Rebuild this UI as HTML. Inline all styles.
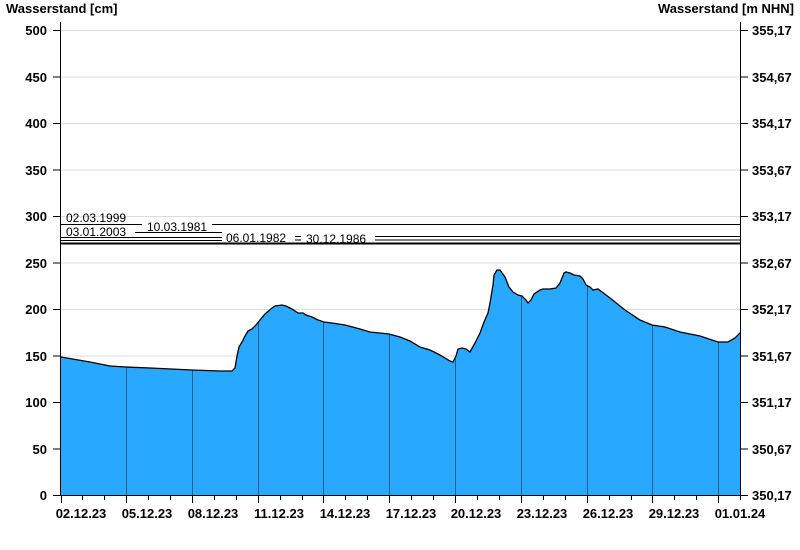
<!DOCTYPE html>
<html><head><meta charset="utf-8"><style>
html,body{margin:0;padding:0;background:#fff;}
svg{display:block;font-family:"Liberation Sans",Arial,sans-serif;}
</style></head><body>
<svg width="800" height="550" viewBox="0 0 800 550" xmlns="http://www.w3.org/2000/svg">
<rect width="800" height="550" fill="#fff"/>
<text x="6" y="13" font-size="13" font-weight="bold" fill="#000">Wasserstand [cm]</text>
<text x="794" y="13" font-size="13" font-weight="bold" fill="#000" text-anchor="end">Wasserstand [m NHN]</text>
<g stroke="#dcdcdc" stroke-width="1">
<line x1="61" y1="30.5" x2="740" y2="30.5"/><line x1="61" y1="77" x2="740" y2="77"/>
<line x1="61" y1="123.5" x2="740" y2="123.5"/><line x1="61" y1="170" x2="740" y2="170"/>
<line x1="61" y1="216.5" x2="740" y2="216.5"/><line x1="61" y1="263" x2="740" y2="263"/>
<line x1="61" y1="309.5" x2="740" y2="309.5"/><line x1="61" y1="356" x2="740" y2="356"/>
<line x1="61" y1="402.5" x2="740" y2="402.5"/><line x1="61" y1="449" x2="740" y2="449"/>
</g>
<path d="M61,357 L90,362 L110,366 L126,367 L150,368 L192,370 L220,371 L232,371 L235,368 L237,356 L239,347 L242,342 L245,336 L248,331 L252,329 L256,325 L260,320 L265,314 L272,308 L275,306 L282,305 L286,306 L292,309 L298,313 L303,313 L306,315 L312,317 L318,320 L324,322 L332,323 L345,325 L360,329 L370,332 L389,334 L400,337 L410,341 L420,347 L430,350 L440,355 L450,361 L453,362 L456,356 L458,349 L462,348 L466,349 L470,352 L475,343 L480,333 L484,322 L488,313 L490,303 L493,285 L494,275 L497,270 L500,270 L505,277 L509,287 L513,292 L518,295 L522,296 L526,300 L528,303 L531,300 L534,294 L540,290 L543,289 L550,289 L556,288 L560,283 L564,273 L566,272 L570,273 L574,275 L580,276 L583,279 L586,285 L590,287 L593,290 L598,289 L610,298 L625,310 L640,320 L652,325 L665,327 L680,332 L700,336 L712,340 L718,342 L728,342 L735,338 L740,333 L740,495 L61,495 Z" fill="#29a8ff"/>
<g stroke="#1e5f8c" stroke-width="1">
<line x1="126.5" y1="367" x2="126.5" y2="495"/><line x1="192.5" y1="370" x2="192.5" y2="495"/>
<line x1="258.5" y1="323" x2="258.5" y2="495"/><line x1="323.5" y1="322" x2="323.5" y2="495"/>
<line x1="389.5" y1="334" x2="389.5" y2="495"/><line x1="455.5" y1="359" x2="455.5" y2="495"/>
<line x1="521.5" y1="296" x2="521.5" y2="495"/><line x1="587.5" y1="286" x2="587.5" y2="495"/>
<line x1="652.5" y1="325" x2="652.5" y2="495"/><line x1="718.5" y1="342" x2="718.5" y2="495"/>
</g>
<path d="M61,357 L90,362 L110,366 L126,367 L150,368 L192,370 L220,371 L232,371 L235,368 L237,356 L239,347 L242,342 L245,336 L248,331 L252,329 L256,325 L260,320 L265,314 L272,308 L275,306 L282,305 L286,306 L292,309 L298,313 L303,313 L306,315 L312,317 L318,320 L324,322 L332,323 L345,325 L360,329 L370,332 L389,334 L400,337 L410,341 L420,347 L430,350 L440,355 L450,361 L453,362 L456,356 L458,349 L462,348 L466,349 L470,352 L475,343 L480,333 L484,322 L488,313 L490,303 L493,285 L494,275 L497,270 L500,270 L505,277 L509,287 L513,292 L518,295 L522,296 L526,300 L528,303 L531,300 L534,294 L540,290 L543,289 L550,289 L556,288 L560,283 L564,273 L566,272 L570,273 L574,275 L580,276 L583,279 L586,285 L590,287 L593,290 L598,289 L610,298 L625,310 L640,320 L652,325 L665,327 L680,332 L700,336 L712,340 L718,342 L728,342 L735,338 L740,333" fill="none" stroke="#000" stroke-width="1.3"/>
<g stroke="#000" stroke-width="1">
<line x1="61" y1="224.5" x2="142" y2="224.5"/><line x1="212" y1="224.5" x2="740" y2="224.5"/>
<line x1="135" y1="232.5" x2="222" y2="232.5"/>
<line x1="61" y1="237.5" x2="222" y2="237.5"/>
<line x1="295" y1="236.5" x2="301" y2="236.5"/><line x1="375" y1="236.5" x2="740" y2="236.5"/>
<line x1="61" y1="240.5" x2="222" y2="240.5"/><line x1="295" y1="240" x2="301" y2="240"/><line x1="375" y1="240" x2="740" y2="240"/>
</g>
<line x1="61" y1="243.5" x2="740" y2="243.5" stroke="#000" stroke-width="2"/>
<g font-size="12" fill="#000">
<text x="66" y="222">02.03.1999</text>
<text x="66" y="236">03.01.2003</text>
<text x="147" y="231">10.03.1981</text>
<text x="226" y="242">06.01.1982</text>
<text x="306" y="243">30.12.1986</text>
</g>
<g stroke="#000" stroke-width="1">
<line x1="60.5" y1="22" x2="60.5" y2="495"/>
<line x1="740.5" y1="22" x2="740.5" y2="495"/>
<line x1="60" y1="495.5" x2="741" y2="495.5"/>
</g>
<g stroke="#000" stroke-width="1">
<line x1="53" y1="30.5" x2="60" y2="30.5"/><line x1="53" y1="77" x2="60" y2="77"/><line x1="53" y1="123.5" x2="60" y2="123.5"/>
<line x1="53" y1="170" x2="60" y2="170"/><line x1="53" y1="216.5" x2="60" y2="216.5"/><line x1="53" y1="263" x2="60" y2="263"/>
<line x1="53" y1="309.5" x2="60" y2="309.5"/><line x1="53" y1="356" x2="60" y2="356"/><line x1="53" y1="402.5" x2="60" y2="402.5"/>
<line x1="53" y1="449" x2="60" y2="449"/><line x1="53" y1="495.5" x2="60" y2="495.5"/>
<line x1="741" y1="30.5" x2="748" y2="30.5"/><line x1="741" y1="77" x2="748" y2="77"/><line x1="741" y1="123.5" x2="748" y2="123.5"/>
<line x1="741" y1="170" x2="748" y2="170"/><line x1="741" y1="216.5" x2="748" y2="216.5"/><line x1="741" y1="263" x2="748" y2="263"/>
<line x1="741" y1="309.5" x2="748" y2="309.5"/><line x1="741" y1="356" x2="748" y2="356"/><line x1="741" y1="402.5" x2="748" y2="402.5"/>
<line x1="741" y1="449" x2="748" y2="449"/><line x1="741" y1="495.5" x2="748" y2="495.5"/>
</g>
<g font-size="13" font-weight="bold" fill="#000" text-anchor="end">
<text x="47" y="35">500</text><text x="47" y="82">450</text><text x="47" y="128">400</text>
<text x="47" y="175">350</text><text x="47" y="221">300</text><text x="47" y="268">250</text>
<text x="47" y="314">200</text><text x="47" y="361">150</text><text x="47" y="407">100</text>
<text x="47" y="454">50</text><text x="47" y="500">0</text>
</g>
<g font-size="13" font-weight="bold" fill="#000">
<text x="752" y="35">355,17</text><text x="752" y="82">354,67</text><text x="752" y="128">354,17</text>
<text x="752" y="175">353,67</text><text x="752" y="221">353,17</text><text x="752" y="268">352,67</text>
<text x="752" y="314">352,17</text><text x="752" y="361">351,67</text><text x="752" y="407">351,17</text>
<text x="752" y="454">350,67</text><text x="752" y="500">350,17</text>
</g>
<g stroke="#000" stroke-width="1">
<path d="M82.5,496v4M104.5,496v4M148.5,496v4M170.5,496v4M214.5,496v4M236.5,496v4M280.5,496v4M302.5,496v4M345.5,496v4M367.5,496v4M411.5,496v4M433.5,496v4M477.5,496v4M499.5,496v4M543.5,496v4M565.5,496v4M609.5,496v4M631.5,496v4M674.5,496v4M696.5,496v4M61.5,496v7M126.5,496v7M192.5,496v7M258.5,496v7M323.5,496v7M389.5,496v7M455.5,496v7M521.5,496v7M587.5,496v7M652.5,496v7M718.5,496v7M740.5,496v4"/>
</g>
<g font-size="13" font-weight="bold" fill="#000" text-anchor="middle">
<text x="81" y="518">02.12.23</text><text x="147" y="518">05.12.23</text><text x="213" y="518">08.12.23</text>
<text x="279" y="518">11.12.23</text><text x="345" y="518">14.12.23</text><text x="411" y="518">17.12.23</text>
<text x="476" y="518">20.12.23</text><text x="542" y="518">23.12.23</text><text x="608" y="518">26.12.23</text>
<text x="674" y="518">29.12.23</text><text x="740" y="518">01.01.24</text>
</g>
</svg>
</body></html>
